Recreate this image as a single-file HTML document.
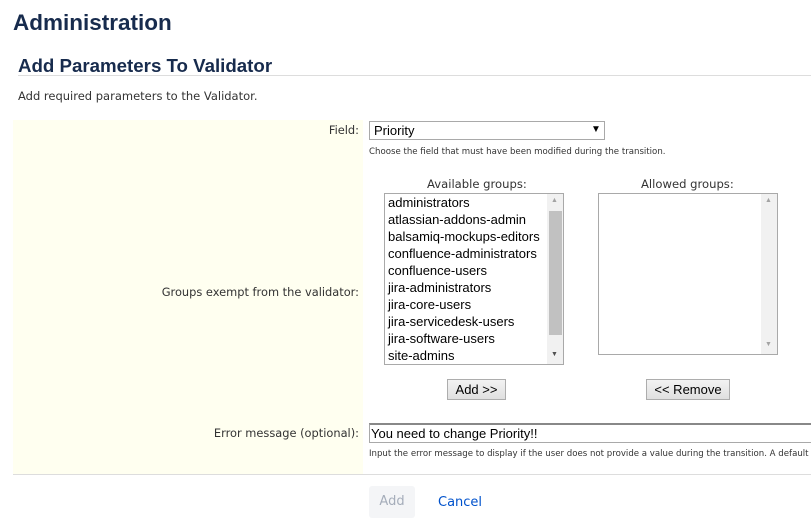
<!DOCTYPE html>
<html><head><meta charset="utf-8"><style>
body{margin:0;width:811px;height:526px;background:#fff;position:relative;overflow:hidden;font-family:"Liberation Sans",sans-serif;color:#333}
.a{position:absolute;white-space:nowrap}
.lbl{font-family:"DejaVu Sans","Liberation Sans",sans-serif;font-size:11.4px;color:#333;text-align:right;right:452px}
.help{font-family:"DejaVu Sans","Liberation Sans",sans-serif;font-size:8.6px;color:#333}
.box{position:absolute;border:1px solid #a9a9a9;background:#fff;box-sizing:border-box}
.btn{position:absolute;border:1px solid #adadad;box-sizing:border-box;font-size:13px;color:#000;text-align:center;line-height:19px;background:linear-gradient(#f3f3f3,#e0e0e0)}
.it{position:absolute;left:3px;font-size:13px;color:#000;line-height:17px}
</style></head><body>
<div class="a" style="left:13px;top:10px;font-size:22.5px;font-weight:bold;color:#172B4D">Administration</div>
<div class="a" style="left:18px;top:55px;font-size:18.7px;font-weight:bold;color:#172B4D">Add Parameters To Validator</div>
<div class="a" style="left:18px;top:75px;width:793px;height:1px;background:#ddd"></div>
<div class="a" style="left:18px;top:89px;font-size:11.5px;font-family:'DejaVu Sans','Liberation Sans',sans-serif;color:#333">Add required parameters to the Validator.</div>
<div class="a" style="left:13px;top:120px;width:350px;height:354px;background:#fffff0"></div>
<div class="a" style="left:13px;top:474px;width:798px;height:1px;background:#ddd"></div>

<div class="a lbl" style="top:123px">Field:</div>
<div class="box" style="left:369px;top:121px;width:236px;height:19px"><span class="a" style="left:4px;top:1px;font-size:13px;color:#000">Priority</span><span class="a" style="left:221px;top:2px;font-size:10px;color:#000">▼</span></div>
<div class="a help" style="left:369px;top:147px">Choose the field that must have been modified during the transition.</div>

<div class="a" style="left:427px;top:177px;font-size:11.6px;font-family:'DejaVu Sans','Liberation Sans',sans-serif;color:#333">Available groups:</div>
<div class="a" style="left:641px;top:177px;font-size:11.6px;font-family:'DejaVu Sans','Liberation Sans',sans-serif;color:#333">Allowed groups:</div>

<div class="box" style="left:384px;top:193px;width:180px;height:172px;overflow:hidden">
<div class="it" style="top:0">administrators</div>
<div class="it" style="top:17px">atlassian-addons-admin</div>
<div class="it" style="top:34px">balsamiq-mockups-editors</div>
<div class="it" style="top:51px">confluence-administrators</div>
<div class="it" style="top:68px">confluence-users</div>
<div class="it" style="top:85px">jira-administrators</div>
<div class="it" style="top:102px">jira-core-users</div>
<div class="it" style="top:119px">jira-servicedesk-users</div>
<div class="it" style="top:136px">jira-software-users</div>
<div class="it" style="top:153px">site-admins</div>
<div class="a" style="left:162px;top:0;width:17px;height:170px;background:#f1f1f1"></div>
<div class="a" style="left:164px;top:17px;width:13px;height:124px;background:#c1c1c1"></div>
<div class="a" style="left:166px;top:3px;font-size:7px;color:#a3a3a3">▲</div>
<div class="a" style="left:166px;top:157px;font-size:7px;color:#505050">▼</div>
</div>

<div class="box" style="left:598px;top:193px;width:180px;height:162px;overflow:hidden">
<div class="a" style="left:162px;top:0;width:17px;height:160px;background:#f1f1f1"></div>
<div class="a" style="left:166px;top:3px;font-size:7px;color:#a3a3a3">▲</div>
<div class="a" style="left:166px;top:147px;font-size:7px;color:#a3a3a3">▼</div>
</div>

<div class="a lbl" style="top:285px">Groups exempt from the validator:</div>
<div class="btn" style="left:447px;top:379px;width:59px;height:21px">Add &gt;&gt;</div>
<div class="btn" style="left:646px;top:379px;width:84px;height:21px">&lt;&lt; Remove</div>

<div class="a lbl" style="top:426px">Error message (optional):</div>
<div class="a" style="left:369px;top:423px;width:442px;height:20px;border:1px solid #a9a9a9;border-right:none;border-top:2px solid #888;box-sizing:border-box;background:#fff;overflow:hidden"><span class="a" style="left:1px;top:1px;font-size:13px;color:#000">You need to change Priority!!</span></div>
<div class="a" style="left:369px;top:449px;width:442px;height:14px;overflow:hidden"><span class="a help" style="left:0;top:0">Input the error message to display if the user does not provide a value during the transition. A default message will be used</span></div>

<div class="a" style="left:369px;top:486px;width:46px;height:32px;background:#f4f5f7;border-radius:3px;font-size:13px;color:#a5adba;text-align:center;line-height:32px;font-family:'DejaVu Sans','Liberation Sans',sans-serif">Add</div>
<div class="a" style="left:438px;top:495px;font-size:13px;color:#0052cc;font-family:'DejaVu Sans','Liberation Sans',sans-serif">Cancel</div>
</body></html>
